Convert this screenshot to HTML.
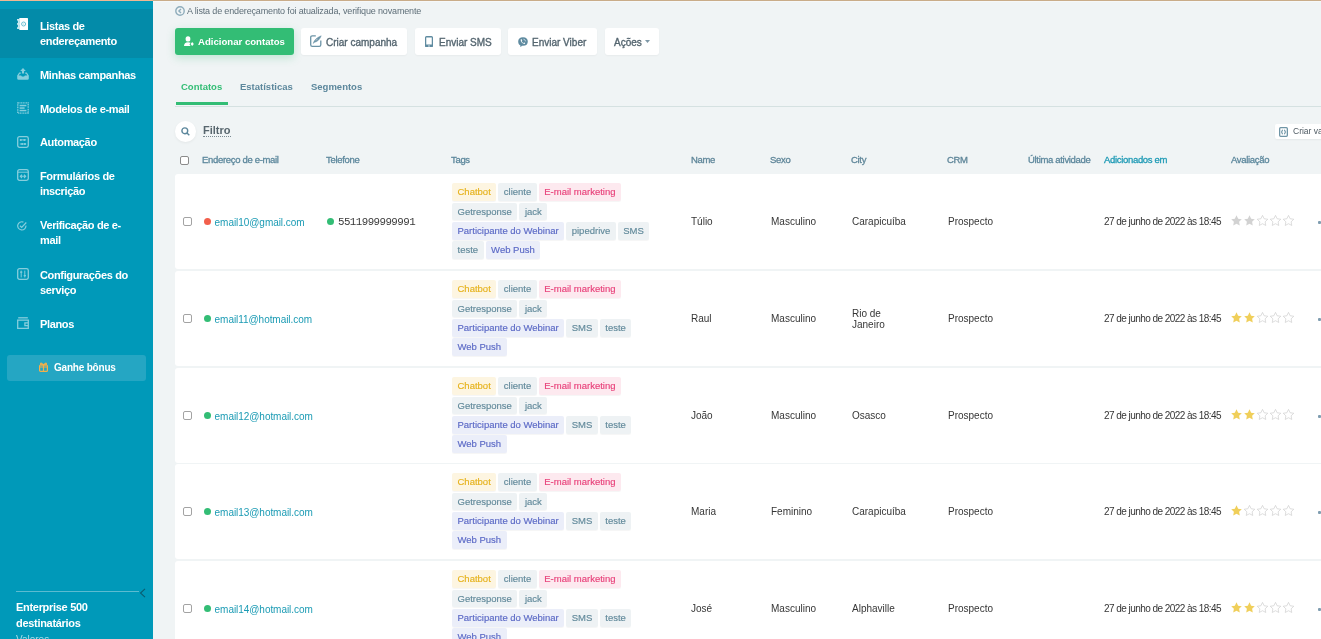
<!DOCTYPE html>
<html><head><meta charset="utf-8">
<style>
*{box-sizing:border-box;margin:0;padding:0}
html,body{width:1321px;height:639px;overflow:hidden}
#wrap{position:absolute;left:0;top:0;width:1321px;height:639px;will-change:transform}
body{background:#f0f4f5;font-family:"Liberation Sans",sans-serif;position:relative;color:#333}
.topline{position:absolute;left:0;top:0;width:1321px;height:1px;background:linear-gradient(90deg,#ecb893 0,#ecb893 153px,#c9ac89 153px);z-index:10}
.topfade{position:absolute;left:153px;top:1px;width:1168px;height:1px;background:#f6f8f9;z-index:9}
#sb{position:absolute;left:0;top:1px;width:153px;height:638px;background:#0099b9;color:#fff}
#sb .act{position:absolute;left:0;top:8px;width:153px;height:49px;background:#038ba9}
.it{position:absolute;left:40px;font-weight:bold;font-size:11px;line-height:15.5px;letter-spacing:-0.35px;color:#fff;white-space:nowrap}
.ic{position:absolute;left:17px;width:12px;height:12px}
.bonus{position:absolute;left:7px;top:354px;width:139px;height:26px;border-radius:3px;background:#25a6c3}
.bonus span{position:absolute;left:47px;top:7px;font-size:10px;font-weight:bold;color:#fff;letter-spacing:-0.2px}
.sbline{position:absolute;left:16px;top:590px;width:123px;height:1px;background:#5cbbd0}
.ent{position:absolute;left:16px;top:598px;font-size:11px;line-height:16px;color:#fff;font-weight:bold;letter-spacing:-0.3px}
.val{position:absolute;left:16px;top:633px;font-size:10px;color:#a6dbe7}
/* main */
.notice{position:absolute;left:187px;top:6px;font-size:9px;color:#5e6e78;letter-spacing:-0.15px}
.btn{position:absolute;top:28px;height:27px;border-radius:3px;background:#fff;box-shadow:0 1px 2px rgba(0,0,0,0.04);font-size:9.6px;font-weight:bold;color:#556670;white-space:nowrap}
.btn span{position:absolute;top:8px}
.btn.g{background:#33bd75;color:#fff;box-shadow:0 3px 8px rgba(51,189,117,0.25)}
.tab{position:absolute;top:81px;font-size:9.5px;font-weight:bold;color:#5c879c}
.tabline{position:absolute;left:175px;top:106px;width:1146px;height:1px;background:#d5e1e1}
.tabul{position:absolute;left:176px;top:102px;width:52px;height:3px;background:#33bd75}
.search{position:absolute;left:175px;top:121px;width:21px;height:21px;border-radius:50%;background:#fff;box-shadow:0 1px 3px rgba(0,0,0,0.06)}
.filtro{position:absolute;left:203px;top:124px;font-size:11px;font-weight:bold;color:#58666e;border-bottom:1px dotted #7a8a92;line-height:12px}
.criar{position:absolute;left:1275px;top:124px;width:60px;height:15px;background:#fff;border-radius:2px;box-shadow:0 1px 2px rgba(0,0,0,0.05)}
.th{position:absolute;top:154px;font-size:9.5px;font-weight:normal;-webkit-text-stroke:0.3px currentColor;letter-spacing:-0.32px;white-space:nowrap}
.cb{position:absolute;width:9px;height:9px;border:1px solid #8b8b8b;border-radius:2px;background:#fff}
.row{position:absolute;left:175px;width:1146px;height:94.5px;background:#fff;border-radius:3px 0 0 3px}
.row .t{position:absolute;white-space:nowrap;font-size:10px;color:#363636}
.tag{position:absolute;height:17.5px;border-radius:2px;font-size:9.5px;line-height:17.2px;padding:0 5.5px;-webkit-text-stroke:0.15px currentColor;white-space:nowrap;box-shadow:0 1px 0 rgba(0,0,0,0.035)}
.ty{background:#fdf5e1;color:#e6b21c}
.tgr{background:#eef2f4;color:#628a9b}
.tp{background:#fde9ef;color:#e8417a}
.tb{background:#ebeef9;color:#5b69c6}
.dot{position:absolute;width:7px;height:7px;border-radius:50%}
.email{color:#1b9bb4 !important}
.tl{position:absolute;display:flex;gap:2px;white-space:nowrap}
.tag{position:relative;display:block}
.date{font-size:10px;letter-spacing:-0.55px}

.row .cb{width:8.5px;height:8.5px;border-color:#a3a3a3}

.btn:not(.g){font-weight:normal;font-size:10px;-webkit-text-stroke:0.35px #556670;color:#556670}
.btn:not(.g) span{top:8.5px}

</style></head><body><div id="wrap">
<div class="topline"></div><div class="topfade"></div>
<div id="sb"><div class="act"></div><svg class="ic" style="top:17px;width:11px" viewBox="0 0 11 12"><rect x="2.3" y="0" width="8.7" height="12" rx="0.6" fill="#fff"/><rect x="0" y="1.2" width="2.6" height="1.3" fill="#fff"/><rect x="0" y="5.3" width="2.6" height="1.3" fill="#fff"/><rect x="0" y="9.4" width="2.6" height="1.3" fill="#fff"/><rect x="0.9" y="1.2" width="1.4" height="9.5" fill="#c8e8f0"/><circle cx="6.6" cy="6" r="2" fill="none" stroke="#6cbfd3" stroke-width="1"/><circle cx="6.6" cy="6" r="0.6" fill="#9ad3e1"/></svg><div class="it" style="top:17.6px">Listas de<br>endereçamento</div><svg class="ic" style="top:66.5px" viewBox="0 0 12 12" fill="#86cedd"><path d="M6 0 L8.8 2.9 H7.1 V5.6 H4.9 V2.9 H3.2Z"/><path d="M2.2 4.6 H3.8 V5.8 H2.9 L1.6 7.6 H4.1 L4.9 8.6 H7.1 L7.9 7.6 H10.4 L9.1 5.8 H8.2 V4.6 H9.8 L11.8 7.4 V10.4 Q11.8 11.8 10.4 11.8 H1.6 Q0.2 11.8 0.2 10.4 V7.4Z"/></svg><div class="it" style="top:66.6px">Minhas campanhas</div><svg class="ic" style="top:100.5px" viewBox="0 0 12 12"><rect x="0.8" y="0.8" width="10.4" height="10.4" fill="none" stroke="#86cedd" stroke-width="1.3" stroke-dasharray="1.1 0.55"/><rect x="2.6" y="2.8" width="6.8" height="1.5" fill="#86cedd"/><rect x="2.6" y="5.3" width="5" height="1.5" fill="#86cedd"/><rect x="2.6" y="7.8" width="6.8" height="1.5" fill="#86cedd"/></svg><div class="it" style="top:100.6px">Modelos de e-mail</div><svg class="ic" style="top:134.5px" viewBox="0 0 12 12" fill="none" stroke="#86cedd" stroke-width="1.3"><rect x="0.7" y="0.7" width="10.6" height="10.6" rx="1.8"/><path d="M2.8 3.9 H9.2 M2.8 8 H9.2" stroke-width="1"/><circle cx="3.8" cy="3.9" r="1" fill="#86cedd" stroke="none"/><circle cx="7.4" cy="3.9" r="1" fill="#86cedd" stroke="none"/><rect x="4.3" y="7.1" width="1.8" height="1.8" fill="#86cedd" stroke="none"/><rect x="7" y="7.1" width="1.8" height="1.8" fill="#86cedd" stroke="none"/></svg><div class="it" style="top:133.6px">Automação</div><svg class="ic" style="top:168px" viewBox="0 0 12 12" fill="none" stroke="#86cedd" stroke-width="1.3"><rect x="0.7" y="0.7" width="10.6" height="10.6" rx="1.8"/><path d="M0.7 3.2 H11.3" stroke-width="1"/><path d="M3.3 7.3 H8.7 M5 5.6 L3.3 7.3 L5 9 M7 5.6 L8.7 7.3 L7 9" stroke-width="1.1"/></svg><div class="it" style="top:167.6px">Formulários de<br>inscrição</div><svg class="ic" style="top:219.5px;width:10px;height:10px" viewBox="0 0 10 10" fill="none" stroke="#86cedd" stroke-width="1.2"><path d="M8.9 4.6 A4.1 4.1 0 1 1 6.4 1.1"/><path d="M3 4.8 L4.7 6.4 L9.3 1.5"/></svg><div class="it" style="top:216.6px">Verificação de e-<br>mail</div><svg class="ic" style="top:267px" viewBox="0 0 12 12" fill="none" stroke="#86cedd" stroke-width="1.3"><rect x="0.7" y="0.7" width="10.6" height="10.6" rx="1.8"/><path d="M4.2 2.6 V9.4 M7.8 2.6 V9.4" stroke-width="1"/><path d="M3.1 4.1 H5.3 M6.7 7.6 H8.9" stroke-width="1.3"/></svg><div class="it" style="top:266.6px">Configurações do<br>serviço</div><svg class="ic" style="top:315.5px" viewBox="0 0 12 12" fill="none" stroke="#86cedd" stroke-width="1.3"><path d="M1.2 0.8 H10.8" /><path d="M0.7 3.1 H11.3 V11.3 H0.7Z"/><path d="M11.3 5.8 H7.9 V8.6 H11.3"/></svg><div class="it" style="top:315.6px">Planos</div><div class="bonus"><svg style="position:absolute;left:31.5px;top:6.7px" width="9" height="10" viewBox="0 0 9 10" fill="none" stroke="#f3b04a" stroke-width="1.2"><rect x="0.6" y="3" width="7.8" height="6.4" rx="1"/><path d="M4.5 3 V9.4 M0.6 5 H8.4"/><path d="M4.5 3 Q2 0 1.5 2 Q1.5 3 4.5 3 Q7 0 7.5 2 Q7.5 3 4.5 3"/></svg><span>Ganhe bônus</span></div><div class="sbline"></div><svg style="position:absolute;left:139px;top:587px" width="7" height="10" viewBox="0 0 7 10" fill="none" stroke="#0a5d70" stroke-width="1.1"><path d="M6 0.8 L1.5 5 L6 9.2"/></svg><div class="ent">Enterprise 500<br>destinatários</div><div class="val">Valores</div></div>
<svg style="position:absolute;left:175px;top:5.5px" width="10" height="10" viewBox="0 0 10 10" fill="none" stroke="#8fadbc" stroke-width="1.4"><circle cx="5" cy="5" r="4.2"/><path d="M6 2.9 L3.9 5 L6 7.1"/></svg>
<div class="notice">A lista de endereçamento foi atualizada, verifique novamente</div>
<div class="btn g" style="left:175px;width:119px"><span style="left:23px">Adicionar contatos</span></div>
<div class="btn " style="left:301px;width:106px"><span style="left:25px">Criar campanha</span></div>
<div class="btn " style="left:415px;width:86px"><span style="left:24px">Enviar SMS</span></div>
<div class="btn " style="left:508px;width:89px"><span style="left:24px">Enviar Viber</span></div>
<div class="btn " style="left:605px;width:54px"><span style="left:9px">Ações</span></div>
<svg style="position:absolute;left:184px;top:36px" width="11" height="11" viewBox="0 0 11 11" fill="#fff"><ellipse cx="4" cy="2.9" rx="2.4" ry="2.6"/><path d="M0 10 Q0 6.2 4 6.2 Q5.6 6.2 6.5 6.8 L5.5 8.5 L6.6 10Z"/><path d="M8.2 6 L9.8 8.1 L8.2 10.1 L6.6 8.1Z"/></svg>
<svg style="position:absolute;left:310px;top:35px" width="12" height="12" viewBox="0 0 12 12" fill="none" stroke="#6b93a6" stroke-width="1.3"><path d="M5.8 0.8 H2.3 Q0.7 0.8 0.7 2.4 V9.7 Q0.7 11.3 2.3 11.3 H9.2 Q10.8 11.3 10.8 9.7 V5.6"/><path d="M3.2 8.4 Q4.5 3.5 11.2 0.8 Q9.2 6.2 4.6 7.3 L3.2 8.4Z" fill="#6b93a6" stroke-width="0.5"/><path d="M5.6 5.3 L7.6 4.1" stroke="#fff" stroke-width="0.5"/></svg>
<svg style="position:absolute;left:424.8px;top:35.5px" width="8" height="11.5" viewBox="0 0 8 11.5"><path fill="#5f8ba0" fill-rule="evenodd" d="M1.5 0 H6.5 Q8 0 8 1.5 V10 Q8 11.5 6.5 11.5 H1.5 Q0 11.5 0 10 V1.5 Q0 0 1.5 0Z M1.25 1.5 V8.6 H6.75 V1.5Z"/><circle cx="4" cy="10" r="0.65" fill="#fff"/></svg>
<svg style="position:absolute;left:517.5px;top:36.5px" width="10" height="10.5" viewBox="0 0 10 10.5"><path d="M5 0.2 C8.2 0.2 9.8 1.8 9.8 4.6 C9.8 7.4 8.2 8.8 5 8.8 L4 8.8 L2.4 10.3 V8.4 C0.9 7.8 0.2 6.5 0.2 4.6 C0.2 1.8 1.8 0.2 5 0.2Z" fill="#5f8ba0"/><path d="M2.6 2.6 C2.6 5 4.2 6.8 6.8 7 L7.2 6 L6.2 5.4 L5.6 6 C4.7 5.6 4 4.8 3.7 3.9 L4.3 3.3 L3.7 2.2Z" fill="#fff"/><path d="M5.4 2.2 A2.4 2.4 0 0 1 7.6 4.4" stroke="#d6e2e8" stroke-width="0.8" fill="none"/></svg>
<svg style="position:absolute;left:645px;top:40px" width="5" height="3" viewBox="0 0 5 3"><path d="M0 0 H5 L2.5 3Z" fill="#7d97a6"/></svg>
<div class="tab" style="left:181px;color:#33bd75">Contatos</div>
<div class="tab" style="left:240px">Estatísticas</div>
<div class="tab" style="left:311px">Segmentos</div>
<div class="tabline"></div><div class="tabul"></div>
<div class="search"><svg style="position:absolute;left:6px;top:6px" width="9" height="9" viewBox="0 0 9 9" fill="none" stroke="#5c879c" stroke-width="1.4"><circle cx="3.8" cy="3.8" r="2.9"/><path d="M6 6 L8.3 8.3"/></svg></div>
<div class="filtro">Filtro</div>
<div class="criar"><svg style="position:absolute;left:4px;top:2.5px" width="9" height="10" viewBox="0 0 9 10" fill="none" stroke="#6f95a6" stroke-width="1.3"><rect x="0.65" y="0.65" width="7.7" height="8.7" rx="1"/><path d="M3.6 2.8 L2.6 5 L3.6 7.2 M5.4 2.8 L6.4 5 L5.4 7.2" stroke-width="1.1"/></svg><span style="position:absolute;left:18px;top:2px;font-size:8.5px;color:#4e5a62">Criar va</span></div>
<div class="cb" style="left:180px;top:156px"></div>
<div class="th" style="left:202px;color:#5c879c">Endereço de e-mail</div>
<div class="th" style="left:326px;color:#5c879c">Telefone</div>
<div class="th" style="left:451px;color:#5c879c">Tags</div>
<div class="th" style="left:691px;color:#5f8699">Name</div>
<div class="th" style="left:770px;color:#5f8699">Sexo</div>
<div class="th" style="left:851px;color:#5f8699">City</div>
<div class="th" style="left:947px;color:#5f8699">CRM</div>
<div class="th" style="left:1028px;color:#5c879c">Última atividade</div>
<div class="th" style="left:1104px;color:#1e9ab5">Adicionados em</div>
<div class="th" style="left:1231px;color:#5c879c">Avaliação</div>
<div class="row" style="top:174px"><div class="cb" style="left:8px;top:43px"></div><div class="dot" style="left:29px;top:43.8px;background:#f25f4c"></div><div class="t email" style="left:39.6px;top:43px;letter-spacing:-0.05px">email10@gmail.com</div><div class="dot" style="left:152px;top:43.8px;background:#33bd75"></div><div class="t" style="left:163px;top:42px;font-family:'Liberation Mono',monospace;font-size:10.8px;letter-spacing:-0.55px;color:#3a3a3a">5511999999991</div><div class="tl" style="left:277px;top:9.4px"><span class="tag ty">Chatbot</span><span class="tag tgr">cliente</span><span class="tag tp">E-mail marketing</span></div><div class="tl" style="left:277px;top:28.7px"><span class="tag tgr">Getresponse</span><span class="tag tgr">jack</span></div><div class="tl" style="left:277px;top:48.0px"><span class="tag tb">Participante do Webinar</span><span class="tag tgr">pipedrive</span><span class="tag tgr">SMS</span></div><div class="tl" style="left:277px;top:67.3px"><span class="tag tgr">teste</span><span class="tag tb">Web Push</span></div><div class="t" style="left:516px;top:42px">Túlio</div><div class="t" style="left:596px;top:42px">Masculino</div><div class="t" style="left:677px;top:42px">Carapicuíba</div><div class="t" style="left:773px;top:42px">Prospecto</div><div class="t date" style="left:929px;top:42px">27 de junho de 2022 às 18:45</div><svg style="position:absolute;left:1056px;top:41px" width="11" height="11" viewBox="0 0 24 24"><path d="M12 .8 L15.6 8.2 L23.5 9.3 L17.7 14.9 L19.1 22.8 L12 19 L4.9 22.8 L6.3 14.9 L.5 9.3 L8.4 8.2Z" fill="#d2d2d2"/></svg><svg style="position:absolute;left:1069px;top:41px" width="11" height="11" viewBox="0 0 24 24"><path d="M12 .8 L15.6 8.2 L23.5 9.3 L17.7 14.9 L19.1 22.8 L12 19 L4.9 22.8 L6.3 14.9 L.5 9.3 L8.4 8.2Z" fill="#d2d2d2"/></svg><svg style="position:absolute;left:1082px;top:41px" width="11" height="11" viewBox="0 0 24 24"><path d="M12 .8 L15.6 8.2 L23.5 9.3 L17.7 14.9 L19.1 22.8 L12 19 L4.9 22.8 L6.3 14.9 L.5 9.3 L8.4 8.2Z" fill="none" stroke="#cdcdcd" stroke-width="1.5"/></svg><svg style="position:absolute;left:1095px;top:41px" width="11" height="11" viewBox="0 0 24 24"><path d="M12 .8 L15.6 8.2 L23.5 9.3 L17.7 14.9 L19.1 22.8 L12 19 L4.9 22.8 L6.3 14.9 L.5 9.3 L8.4 8.2Z" fill="none" stroke="#cdcdcd" stroke-width="1.5"/></svg><svg style="position:absolute;left:1108px;top:41px" width="11" height="11" viewBox="0 0 24 24"><path d="M12 .8 L15.6 8.2 L23.5 9.3 L17.7 14.9 L19.1 22.8 L12 19 L4.9 22.8 L6.3 14.9 L.5 9.3 L8.4 8.2Z" fill="none" stroke="#cdcdcd" stroke-width="1.5"/></svg><div class="dot" style="left:1143px;top:47px;width:3px;height:3px;border-radius:1px;background:#7f9db0"></div></div>
<div class="row" style="top:271px"><div class="cb" style="left:8px;top:43px"></div><div class="dot" style="left:29px;top:43.8px;background:#33bd75"></div><div class="t email" style="left:39.6px;top:43px;letter-spacing:-0.05px">email11@hotmail.com</div><div class="tl" style="left:277px;top:9.4px"><span class="tag ty">Chatbot</span><span class="tag tgr">cliente</span><span class="tag tp">E-mail marketing</span></div><div class="tl" style="left:277px;top:28.7px"><span class="tag tgr">Getresponse</span><span class="tag tgr">jack</span></div><div class="tl" style="left:277px;top:48.0px"><span class="tag tb">Participante do Webinar</span><span class="tag tgr">SMS</span><span class="tag tgr">teste</span></div><div class="tl" style="left:277px;top:67.3px"><span class="tag tb">Web Push</span></div><div class="t" style="left:516px;top:42px">Raul</div><div class="t" style="left:596px;top:42px">Masculino</div><div class="t" style="left:677px;top:37px;line-height:11px">Rio de<br>Janeiro</div><div class="t" style="left:773px;top:42px">Prospecto</div><div class="t date" style="left:929px;top:42px">27 de junho de 2022 às 18:45</div><svg style="position:absolute;left:1056px;top:41px" width="11" height="11" viewBox="0 0 24 24"><path d="M12 .8 L15.6 8.2 L23.5 9.3 L17.7 14.9 L19.1 22.8 L12 19 L4.9 22.8 L6.3 14.9 L.5 9.3 L8.4 8.2Z" fill="#f0cf5a"/></svg><svg style="position:absolute;left:1069px;top:41px" width="11" height="11" viewBox="0 0 24 24"><path d="M12 .8 L15.6 8.2 L23.5 9.3 L17.7 14.9 L19.1 22.8 L12 19 L4.9 22.8 L6.3 14.9 L.5 9.3 L8.4 8.2Z" fill="#f0cf5a"/></svg><svg style="position:absolute;left:1082px;top:41px" width="11" height="11" viewBox="0 0 24 24"><path d="M12 .8 L15.6 8.2 L23.5 9.3 L17.7 14.9 L19.1 22.8 L12 19 L4.9 22.8 L6.3 14.9 L.5 9.3 L8.4 8.2Z" fill="none" stroke="#cdcdcd" stroke-width="1.5"/></svg><svg style="position:absolute;left:1095px;top:41px" width="11" height="11" viewBox="0 0 24 24"><path d="M12 .8 L15.6 8.2 L23.5 9.3 L17.7 14.9 L19.1 22.8 L12 19 L4.9 22.8 L6.3 14.9 L.5 9.3 L8.4 8.2Z" fill="none" stroke="#cdcdcd" stroke-width="1.5"/></svg><svg style="position:absolute;left:1108px;top:41px" width="11" height="11" viewBox="0 0 24 24"><path d="M12 .8 L15.6 8.2 L23.5 9.3 L17.7 14.9 L19.1 22.8 L12 19 L4.9 22.8 L6.3 14.9 L.5 9.3 L8.4 8.2Z" fill="none" stroke="#cdcdcd" stroke-width="1.5"/></svg><div class="dot" style="left:1143px;top:47px;width:3px;height:3px;border-radius:1px;background:#7f9db0"></div></div>
<div class="row" style="top:368px"><div class="cb" style="left:8px;top:43px"></div><div class="dot" style="left:29px;top:43.8px;background:#33bd75"></div><div class="t email" style="left:39.6px;top:43px;letter-spacing:-0.05px">email12@hotmail.com</div><div class="tl" style="left:277px;top:9.4px"><span class="tag ty">Chatbot</span><span class="tag tgr">cliente</span><span class="tag tp">E-mail marketing</span></div><div class="tl" style="left:277px;top:28.7px"><span class="tag tgr">Getresponse</span><span class="tag tgr">jack</span></div><div class="tl" style="left:277px;top:48.0px"><span class="tag tb">Participante do Webinar</span><span class="tag tgr">SMS</span><span class="tag tgr">teste</span></div><div class="tl" style="left:277px;top:67.3px"><span class="tag tb">Web Push</span></div><div class="t" style="left:516px;top:42px">João</div><div class="t" style="left:596px;top:42px">Masculino</div><div class="t" style="left:677px;top:42px">Osasco</div><div class="t" style="left:773px;top:42px">Prospecto</div><div class="t date" style="left:929px;top:42px">27 de junho de 2022 às 18:45</div><svg style="position:absolute;left:1056px;top:41px" width="11" height="11" viewBox="0 0 24 24"><path d="M12 .8 L15.6 8.2 L23.5 9.3 L17.7 14.9 L19.1 22.8 L12 19 L4.9 22.8 L6.3 14.9 L.5 9.3 L8.4 8.2Z" fill="#f0cf5a"/></svg><svg style="position:absolute;left:1069px;top:41px" width="11" height="11" viewBox="0 0 24 24"><path d="M12 .8 L15.6 8.2 L23.5 9.3 L17.7 14.9 L19.1 22.8 L12 19 L4.9 22.8 L6.3 14.9 L.5 9.3 L8.4 8.2Z" fill="#f0cf5a"/></svg><svg style="position:absolute;left:1082px;top:41px" width="11" height="11" viewBox="0 0 24 24"><path d="M12 .8 L15.6 8.2 L23.5 9.3 L17.7 14.9 L19.1 22.8 L12 19 L4.9 22.8 L6.3 14.9 L.5 9.3 L8.4 8.2Z" fill="none" stroke="#cdcdcd" stroke-width="1.5"/></svg><svg style="position:absolute;left:1095px;top:41px" width="11" height="11" viewBox="0 0 24 24"><path d="M12 .8 L15.6 8.2 L23.5 9.3 L17.7 14.9 L19.1 22.8 L12 19 L4.9 22.8 L6.3 14.9 L.5 9.3 L8.4 8.2Z" fill="none" stroke="#cdcdcd" stroke-width="1.5"/></svg><svg style="position:absolute;left:1108px;top:41px" width="11" height="11" viewBox="0 0 24 24"><path d="M12 .8 L15.6 8.2 L23.5 9.3 L17.7 14.9 L19.1 22.8 L12 19 L4.9 22.8 L6.3 14.9 L.5 9.3 L8.4 8.2Z" fill="none" stroke="#cdcdcd" stroke-width="1.5"/></svg><div class="dot" style="left:1143px;top:47px;width:3px;height:3px;border-radius:1px;background:#7f9db0"></div></div>
<div class="row" style="top:464px"><div class="cb" style="left:8px;top:43px"></div><div class="dot" style="left:29px;top:43.8px;background:#33bd75"></div><div class="t email" style="left:39.6px;top:43px;letter-spacing:-0.05px">email13@hotmail.com</div><div class="tl" style="left:277px;top:9.4px"><span class="tag ty">Chatbot</span><span class="tag tgr">cliente</span><span class="tag tp">E-mail marketing</span></div><div class="tl" style="left:277px;top:28.7px"><span class="tag tgr">Getresponse</span><span class="tag tgr">jack</span></div><div class="tl" style="left:277px;top:48.0px"><span class="tag tb">Participante do Webinar</span><span class="tag tgr">SMS</span><span class="tag tgr">teste</span></div><div class="tl" style="left:277px;top:67.3px"><span class="tag tb">Web Push</span></div><div class="t" style="left:516px;top:42px">Maria</div><div class="t" style="left:596px;top:42px">Feminino</div><div class="t" style="left:677px;top:42px">Carapicuíba</div><div class="t" style="left:773px;top:42px">Prospecto</div><div class="t date" style="left:929px;top:42px">27 de junho de 2022 às 18:45</div><svg style="position:absolute;left:1056px;top:41px" width="11" height="11" viewBox="0 0 24 24"><path d="M12 .8 L15.6 8.2 L23.5 9.3 L17.7 14.9 L19.1 22.8 L12 19 L4.9 22.8 L6.3 14.9 L.5 9.3 L8.4 8.2Z" fill="#f0cf5a"/></svg><svg style="position:absolute;left:1069px;top:41px" width="11" height="11" viewBox="0 0 24 24"><path d="M12 .8 L15.6 8.2 L23.5 9.3 L17.7 14.9 L19.1 22.8 L12 19 L4.9 22.8 L6.3 14.9 L.5 9.3 L8.4 8.2Z" fill="none" stroke="#cdcdcd" stroke-width="1.5"/></svg><svg style="position:absolute;left:1082px;top:41px" width="11" height="11" viewBox="0 0 24 24"><path d="M12 .8 L15.6 8.2 L23.5 9.3 L17.7 14.9 L19.1 22.8 L12 19 L4.9 22.8 L6.3 14.9 L.5 9.3 L8.4 8.2Z" fill="none" stroke="#cdcdcd" stroke-width="1.5"/></svg><svg style="position:absolute;left:1095px;top:41px" width="11" height="11" viewBox="0 0 24 24"><path d="M12 .8 L15.6 8.2 L23.5 9.3 L17.7 14.9 L19.1 22.8 L12 19 L4.9 22.8 L6.3 14.9 L.5 9.3 L8.4 8.2Z" fill="none" stroke="#cdcdcd" stroke-width="1.5"/></svg><svg style="position:absolute;left:1108px;top:41px" width="11" height="11" viewBox="0 0 24 24"><path d="M12 .8 L15.6 8.2 L23.5 9.3 L17.7 14.9 L19.1 22.8 L12 19 L4.9 22.8 L6.3 14.9 L.5 9.3 L8.4 8.2Z" fill="none" stroke="#cdcdcd" stroke-width="1.5"/></svg><div class="dot" style="left:1143px;top:47px;width:3px;height:3px;border-radius:1px;background:#7f9db0"></div></div>
<div class="row" style="top:561px"><div class="cb" style="left:8px;top:43px"></div><div class="dot" style="left:29px;top:43.8px;background:#33bd75"></div><div class="t email" style="left:39.6px;top:43px;letter-spacing:-0.05px">email14@hotmail.com</div><div class="tl" style="left:277px;top:9.4px"><span class="tag ty">Chatbot</span><span class="tag tgr">cliente</span><span class="tag tp">E-mail marketing</span></div><div class="tl" style="left:277px;top:28.7px"><span class="tag tgr">Getresponse</span><span class="tag tgr">jack</span></div><div class="tl" style="left:277px;top:48.0px"><span class="tag tb">Participante do Webinar</span><span class="tag tgr">SMS</span><span class="tag tgr">teste</span></div><div class="tl" style="left:277px;top:67.3px"><span class="tag tb">Web Push</span></div><div class="t" style="left:516px;top:42px">José</div><div class="t" style="left:596px;top:42px">Masculino</div><div class="t" style="left:677px;top:42px">Alphaville</div><div class="t" style="left:773px;top:42px">Prospecto</div><div class="t date" style="left:929px;top:42px">27 de junho de 2022 às 18:45</div><svg style="position:absolute;left:1056px;top:41px" width="11" height="11" viewBox="0 0 24 24"><path d="M12 .8 L15.6 8.2 L23.5 9.3 L17.7 14.9 L19.1 22.8 L12 19 L4.9 22.8 L6.3 14.9 L.5 9.3 L8.4 8.2Z" fill="#f0cf5a"/></svg><svg style="position:absolute;left:1069px;top:41px" width="11" height="11" viewBox="0 0 24 24"><path d="M12 .8 L15.6 8.2 L23.5 9.3 L17.7 14.9 L19.1 22.8 L12 19 L4.9 22.8 L6.3 14.9 L.5 9.3 L8.4 8.2Z" fill="#f0cf5a"/></svg><svg style="position:absolute;left:1082px;top:41px" width="11" height="11" viewBox="0 0 24 24"><path d="M12 .8 L15.6 8.2 L23.5 9.3 L17.7 14.9 L19.1 22.8 L12 19 L4.9 22.8 L6.3 14.9 L.5 9.3 L8.4 8.2Z" fill="none" stroke="#cdcdcd" stroke-width="1.5"/></svg><svg style="position:absolute;left:1095px;top:41px" width="11" height="11" viewBox="0 0 24 24"><path d="M12 .8 L15.6 8.2 L23.5 9.3 L17.7 14.9 L19.1 22.8 L12 19 L4.9 22.8 L6.3 14.9 L.5 9.3 L8.4 8.2Z" fill="none" stroke="#cdcdcd" stroke-width="1.5"/></svg><svg style="position:absolute;left:1108px;top:41px" width="11" height="11" viewBox="0 0 24 24"><path d="M12 .8 L15.6 8.2 L23.5 9.3 L17.7 14.9 L19.1 22.8 L12 19 L4.9 22.8 L6.3 14.9 L.5 9.3 L8.4 8.2Z" fill="none" stroke="#cdcdcd" stroke-width="1.5"/></svg><div class="dot" style="left:1143px;top:47px;width:3px;height:3px;border-radius:1px;background:#7f9db0"></div></div>
</div></body></html>
